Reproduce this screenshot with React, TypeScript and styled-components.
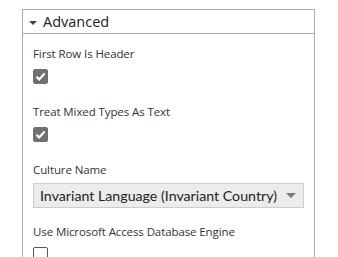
import React from "react"
import styled, { createGlobalStyle } from "styled-components"

const GlobalStyle = createGlobalStyle`
  html, body {
    margin: 0;
    padding: 0;
    background: #ffffff;
    overflow: hidden;
  }
  body {
    font-family: "Open Sans", "Noto Sans", sans-serif;
    color: #333333;
  }
`

const Page = styled.div`
  padding: 9px 0 0 22px;
  width: 315px;
  height: 257px;
  box-sizing: border-box;
`

const Panel = styled.section`
  border: 1px solid #ababab;
  border-bottom: none;
  height: 100%;
  box-sizing: border-box;
  overflow: hidden;
`

const Header = styled.div`
  display: flex;
  align-items: center;
  gap: 6px;
  height: 23px;
  padding-left: 6px;
  border-bottom: 1px solid #ababab;
  font-size: 14.5px;
  color: #222222;
`

const Caret = styled.span`
  width: 0;
  height: 0;
  border-left: 4px solid transparent;
  border-right: 4px solid transparent;
  border-top: 4px solid #444444;
  margin-top: 2px;
`

const Body = styled.div`
  display: flex;
  flex-direction: column;
  padding: 12px 10px 0 10px;
`

const Field = styled.div<{ $gap?: number; $after?: number }>`
  display: flex;
  flex-direction: column;
  gap: ${(p) => p.$gap ?? 7}px;
  margin-bottom: ${(p) => p.$after ?? 20}px;

  &:last-child {
    margin-bottom: 0;
  }
`

const Label = styled.div`
  font-size: 11.5px;
  line-height: 16px;
  color: #333333;
  letter-spacing: -0.1px;
`

const Box = styled.div<{ $checked?: boolean }>`
  width: 15px;
  height: 15px;
  box-sizing: border-box;
  border-radius: 2px;
  background: ${(p) => (p.$checked ? "#707070" : "#ffffff")};
  border: 1px solid ${(p) => (p.$checked ? "#707070" : "#555555")};
  display: flex;
  align-items: center;
  justify-content: center;
`

const Select = styled.div`
  display: flex;
  align-items: center;
  justify-content: space-between;
  height: 25px;
  box-sizing: border-box;
  width: 271px;
  padding: 0 7px 0 6px;
  background: #ececec;
  border: 1px solid #cccccc;
  font-family: Lato, "Open Sans", sans-serif;
  font-size: 14.2px;
  white-space: nowrap;
  color: #222222;
`

const SelectArrow = styled.span`
  width: 0;
  height: 0;
  border-left: 5px solid transparent;
  border-right: 5px solid transparent;
  border-top: 5px solid #7a7a7a;
`

function Check({ checked }: { checked?: boolean }) {
  return (
    <Box $checked={checked}>
      {checked ? (
        <svg width="11" height="11" viewBox="0 0 11 11">
          <path d="M1.5 5.8 L4.2 8.4 L9.6 2.6" fill="none" stroke="#ffffff" strokeWidth="2.2" />
        </svg>
      ) : null}
    </Box>
  )
}

export default function App() {
  return (
    <Page>
      <GlobalStyle />
      <Panel>
        <Header>
          <Caret />
          <span>Advanced</span>
        </Header>
        <Body>
          <Field>
            <Label>First Row Is Header</Label>
            <Check checked />
          </Field>
          <Field>
            <Label>Treat Mixed Types As Text</Label>
            <Check checked />
          </Field>
          <Field $gap={5} $after={16}>
            <Label>Culture Name</Label>
            <Select>
              <span>Invariant Language (Invariant Country)</span>
              <SelectArrow />
            </Select>
          </Field>
          <Field>
            <Label>Use Microsoft Access Database Engine</Label>
            <Check />
          </Field>
        </Body>
      </Panel>
    </Page>
  )
}
